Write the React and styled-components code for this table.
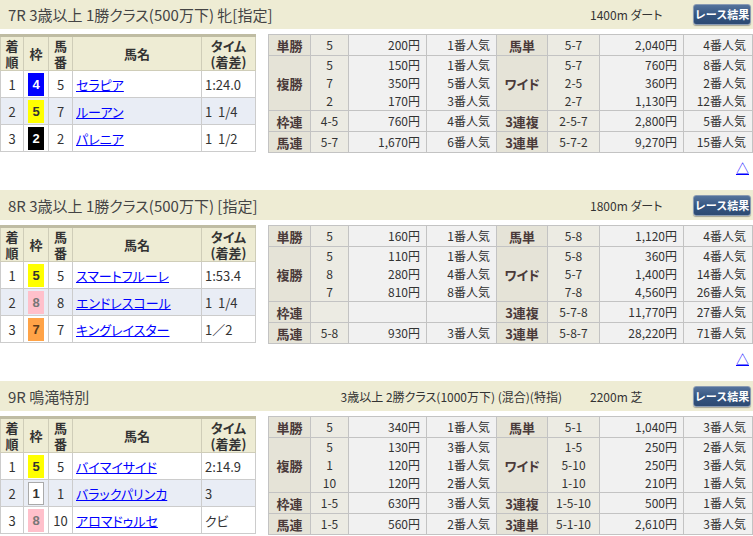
import React from "react";
import styled, { createGlobalStyle } from "styled-components";

const GlobalStyle = createGlobalStyle`
  html, body { margin: 0; padding: 0; background: #fff; }
  body {
    font-family: "Noto Sans CJK JP", "Noto Sans", sans-serif;
    font-feature-settings: "palt";
    color: #333;
  }
`;

const NUM_FONT = `"Noto Sans CJK JP", sans-serif`;

const FRAME_COLORS = {
  1: { bg: "#ffffff", fg: "#333", border: "#aaa" },
  2: { bg: "#000000", fg: "#fff", border: "#000" },
  3: { bg: "#ff0000", fg: "#fff", border: "#f00" },
  4: { bg: "#0000ff", fg: "#fff", border: "#00f" },
  5: { bg: "#ffff00", fg: "#333", border: "#ff0" },
  6: { bg: "#00a000", fg: "#fff", border: "#0a0" },
  7: { bg: "#ffa347", fg: "#5a3a1a", border: "#ffa347" },
  8: { bg: "#ffc0cb", fg: "#777", border: "#ffc0cb" },
};

const races = [
  {
    title: "7R 3歳以上 1勝クラス(500万下) 牝[指定]",
    cond: "",
    dist: "1400m ダート",
    results: [
      { pos: 1, frame: 4, num: 5, name: "セラピア", time: "1:24.0" },
      { pos: 2, frame: 5, num: 7, name: "ルーアン", time: "1\u00a0\u00a01/4" },
      { pos: 3, frame: 2, num: 2, name: "パレニア", time: "1\u00a0\u00a01/2" },
    ],
    pay: {
      win: ["5", "200円", "1番人気"],
      exacta: ["5-7", "2,040円", "4番人気"],
      place: [["5", "7", "2"], ["150円", "350円", "170円"], ["1番人気", "5番人気", "3番人気"]],
      wide: [["5-7", "2-5", "2-7"], ["760円", "360円", "1,130円"], ["8番人気", "2番人気", "12番人気"]],
      bracket: ["4-5", "760円", "4番人気"],
      trio: ["2-5-7", "2,800円", "5番人気"],
      quinella: ["5-7", "1,670円", "6番人気"],
      trifecta: ["5-7-2", "9,270円", "15番人気"],
    },
  },
  {
    title: "8R 3歳以上 1勝クラス(500万下) [指定]",
    cond: "",
    dist: "1800m ダート",
    results: [
      { pos: 1, frame: 5, num: 5, name: "スマートフルーレ", time: "1:53.4" },
      { pos: 2, frame: 8, num: 8, name: "エンドレスコール", time: "1\u00a0\u00a01/4" },
      { pos: 3, frame: 7, num: 7, name: "キングレイスター", time: "1／2" },
    ],
    pay: {
      win: ["5", "160円", "1番人気"],
      exacta: ["5-8", "1,120円", "4番人気"],
      place: [["5", "8", "7"], ["110円", "280円", "810円"], ["1番人気", "4番人気", "8番人気"]],
      wide: [["5-8", "5-7", "7-8"], ["360円", "1,400円", "4,560円"], ["4番人気", "14番人気", "26番人気"]],
      bracket: ["", "", ""],
      trio: ["5-7-8", "11,770円", "27番人気"],
      quinella: ["5-8", "930円", "3番人気"],
      trifecta: ["5-8-7", "28,220円", "71番人気"],
    },
  },
  {
    title: "9R 鳴滝特別",
    cond: "3歳以上 2勝クラス(1000万下) (混合)(特指)",
    dist: "2200m 芝",
    results: [
      { pos: 1, frame: 5, num: 5, name: "バイマイサイド", time: "2:14.9" },
      { pos: 2, frame: 1, num: 1, name: "バラックパリンカ", time: "3" },
      { pos: 3, frame: 8, num: 10, name: "アロマドゥルセ", time: "クビ" },
    ],
    pay: {
      win: ["5", "340円", "1番人気"],
      exacta: ["5-1", "1,040円", "3番人気"],
      place: [["5", "1", "10"], ["130円", "120円", "120円"], ["3番人気", "1番人気", "2番人気"]],
      wide: [["1-5", "5-10", "1-10"], ["250円", "250円", "210円"], ["2番人気", "3番人気", "1番人気"]],
      bracket: ["1-5", "630円", "3番人気"],
      trio: ["1-5-10", "500円", "1番人気"],
      quinella: ["1-5", "560円", "2番人気"],
      trifecta: ["5-1-10", "2,610円", "3番人気"],
    },
  },
];

const Page = styled.div`
  width: 753px;
  margin-top: -1px;
`;

const Section = styled.section`
  display: flex;
  flex-direction: column;
`;

const HeaderBar = styled.div`
  display: flex;
  align-items: center;
  height: 30px;
  background: #eeecd4;
`;

const Title = styled.h2`
  flex: 1;
  margin: 0;
  padding-left: 8px;
  font-size: 15px;
  font-weight: normal;
  color: #444;
  white-space: nowrap;
`;

const Conditions = styled.span`
  font-size: 12px;
  color: #333;
  padding-right: 28px;
  white-space: nowrap;
`;

const Distance = styled.span`
  width: 103px;
  font-size: 12px;
  color: #333;
  white-space: nowrap;
`;

const ResultButton = styled.button`
  width: 58px;
  height: 21px;
  margin-right: 2px;
  padding: 0;
  border: 1px solid #8a9bb3;
  border-radius: 3px;
  background: linear-gradient(#55739c, #34547f 55%, #2d4a73);
  box-shadow: 0 1px 1px rgba(0, 0, 0, 0.3);
  color: #fff;
  font-family: inherit;
  font-size: 11px;
  font-weight: bold;
  letter-spacing: 0;
  white-space: nowrap;
  cursor: pointer;
`;

const Body = styled.div`
  display: flex;
  justify-content: space-between;
  align-items: flex-start;
  margin-top: 5px;
`;

const Results = styled.table`
  width: 255px;
  border-collapse: collapse;
  table-layout: fixed;
  border-top: 3px solid #bfbca3;
`;

const HeadCell = styled.th`
  height: 33px;
  padding: 0;
  background: #eeecd4;
  border: 1px solid #cfcdb8;
  border-top: none;
  color: #333;
  font-size: 13px;
  font-weight: bold;
  line-height: 16px;
`;

const ResultRow = styled.tr`
  background: ${(p) => (p.$alt ? "#e9edf5" : "#fff")};
`;

const Cell = styled.td`
  height: 26px;
  padding: 0 0 0 ${(p) => (p.$left ? "3px" : "0")};
  border: 1px solid #cccccc;
  text-align: ${(p) => (p.$left ? "left" : "center")};
  font-size: 13px;
  color: #333;
  white-space: nowrap;
  overflow: hidden;
`;

const FrameBox = styled.span`
  display: inline-block;
  box-sizing: border-box;
  width: 16px;
  height: 23px;
  line-height: 21px;
  vertical-align: middle;
  background: ${(p) => FRAME_COLORS[p.$frame].bg};
  border: 1px solid ${(p) => FRAME_COLORS[p.$frame].border};
  color: ${(p) => FRAME_COLORS[p.$frame].fg};
  font-size: 13px;
  font-weight: bold;
  font-family: "Liberation Sans", sans-serif;
`;

const HorseLink = styled.a`
  color: #0000ff;
  text-decoration: underline;
  font-size: 13px;
`;

const Payouts = styled.table`
  width: 485px;
  border-collapse: collapse;
  table-layout: fixed;
  border: 1px solid #bdbdbd;
`;

const Label = styled.th`
  padding: 0;
  background: #e5e3d7;
  border: 1px solid #c3c3c3;
  color: #4a3a3a;
  font-size: 13px;
  font-weight: bold;
  height: ${(p) => (p.$tall ? "54px" : "20px")};
`;

const Combo = styled.td`
  padding: 0;
  background: #ecebe3;
  border: 1px solid #c3c3c3;
  text-align: center;
  font-size: 12px;
  font-family: ${NUM_FONT};
  color: #333;
  line-height: 18px;
`;

const Amount = styled.td`
  padding: 0 6px 0 0;
  background: #f1f1f1;
  border: 1px solid #c3c3c3;
  text-align: right;
  font-size: 12px;
  font-family: ${NUM_FONT};
  color: #333;
  white-space: nowrap;
  line-height: 18px;
`;

const Line = styled.div`
  height: 18px;
  line-height: 18px;
`;

const ToTop = styled.div`
  height: 37px;
  box-sizing: border-box;
  padding: 1px 4px 0 0;
  text-align: right;
`;

const TopLink = styled.a`
  color: #0000ff;
  text-decoration: underline;
  font-size: 13px;
  line-height: 18px;
`;

const Multi = ({ lines }) => (
  <>
    {lines.map((l, i) => (
      <Line key={i}>{l}</Line>
    ))}
  </>
);

function ResultTable({ rows }) {
  return (
    <Results>
      <colgroup>
        <col style={{ width: 23 }} />
        <col style={{ width: 25 }} />
        <col style={{ width: 24 }} />
        <col style={{ width: 129 }} />
        <col style={{ width: 54 }} />
      </colgroup>
      <thead>
        <tr>
          <HeadCell>着<br />順</HeadCell>
          <HeadCell>枠</HeadCell>
          <HeadCell>馬<br />番</HeadCell>
          <HeadCell>馬名</HeadCell>
          <HeadCell>タイム<br />(着差)</HeadCell>
        </tr>
      </thead>
      <tbody>
        {rows.map((r, i) => (
          <ResultRow key={r.pos} $alt={i === 1}>
            <Cell>{r.pos}</Cell>
            <Cell>
              <FrameBox $frame={r.frame}>{r.frame}</FrameBox>
            </Cell>
            <Cell>{r.num}</Cell>
            <Cell $left>
              <HorseLink href="#">{r.name}</HorseLink>
            </Cell>
            <Cell $left>{r.time}</Cell>
          </ResultRow>
        ))}
      </tbody>
    </Results>
  );
}

function PayoutTable({ pay }) {
  const single = (label, [c, a, p]) => [
    <Label key={label + "l"}>{label}</Label>,
    <Combo key={label + "c"}>{c}</Combo>,
    <Amount key={label + "a"}>{a}</Amount>,
    <Amount key={label + "p"}>{p}</Amount>,
  ];
  return (
    <Payouts>
      <colgroup>
        <col style={{ width: 42 }} />
        <col style={{ width: 38 }} />
        <col style={{ width: 78 }} />
        <col style={{ width: 70 }} />
        <col style={{ width: 51 }} />
        <col style={{ width: 52 }} />
        <col style={{ width: 84 }} />
        <col style={{ width: 69 }} />
      </colgroup>
      <tbody>
        <tr>
          {single("単勝", pay.win)}
          {single("馬単", pay.exacta)}
        </tr>
        <tr>
          <Label $tall>複勝</Label>
          <Combo><Multi lines={pay.place[0]} /></Combo>
          <Amount><Multi lines={pay.place[1]} /></Amount>
          <Amount><Multi lines={pay.place[2]} /></Amount>
          <Label $tall>ワイド</Label>
          <Combo><Multi lines={pay.wide[0]} /></Combo>
          <Amount><Multi lines={pay.wide[1]} /></Amount>
          <Amount><Multi lines={pay.wide[2]} /></Amount>
        </tr>
        <tr>
          {single("枠連", pay.bracket)}
          {single("3連複", pay.trio)}
        </tr>
        <tr>
          {single("馬連", pay.quinella)}
          {single("3連単", pay.trifecta)}
        </tr>
      </tbody>
    </Payouts>
  );
}

export default function App() {
  return (
    <Page>
      <GlobalStyle />
      {races.map((race) => (
        <Section key={race.title}>
          <HeaderBar>
            <Title>{race.title}</Title>
            {race.cond && <Conditions>{race.cond}</Conditions>}
            <Distance>{race.dist}</Distance>
            <ResultButton>レース結果</ResultButton>
          </HeaderBar>
          <Body>
            <ResultTable rows={race.results} />
            <PayoutTable pay={race.pay} />
          </Body>
          <ToTop>
            <TopLink href="#">△</TopLink>
          </ToTop>
        </Section>
      ))}
    </Page>
  );
}
